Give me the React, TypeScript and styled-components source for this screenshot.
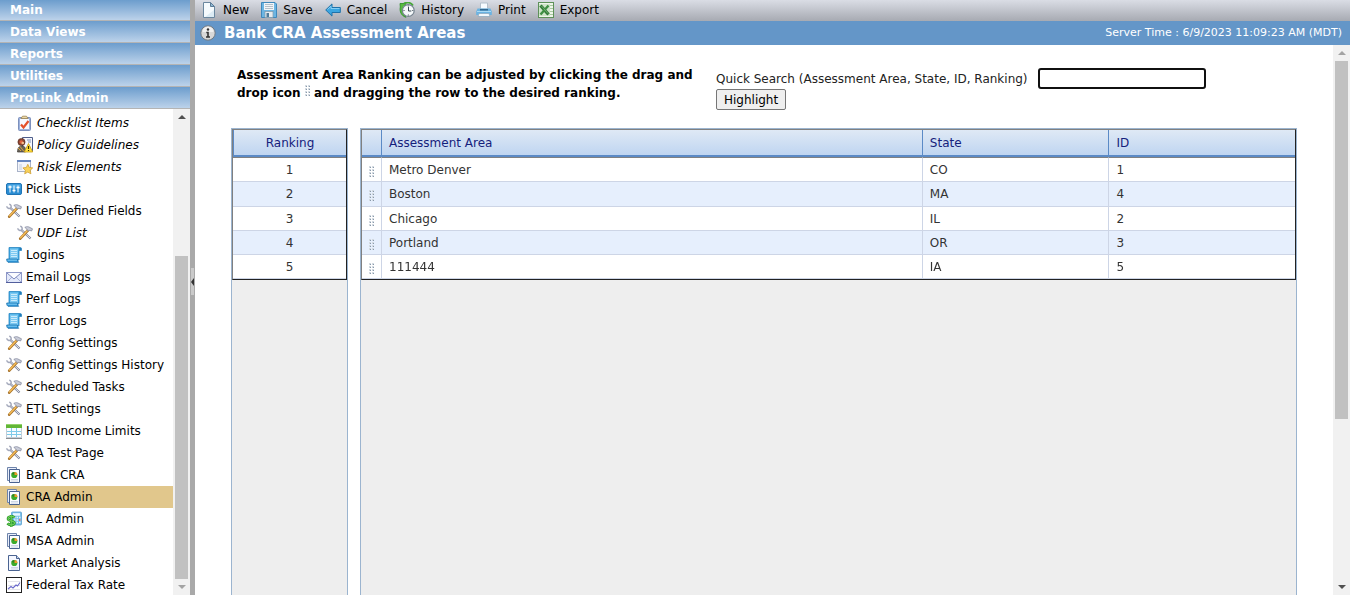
import React from 'react';
import styled, { createGlobalStyle, css } from 'styled-components';

const GlobalStyle = createGlobalStyle`
  * { box-sizing: border-box; }
  body {
    margin: 0;
    background: #fff;
    color: #000;
    font: 12px/18px "DejaVu Sans", sans-serif;
  }
  button, input { font: inherit; color: inherit; }
`;

/* ---------- Icons ---------- */

const Svg = styled.svg`
  flex: none;
  display: block;
  width: 16px;
  height: 16px;
`;

const Icon = ({ children }: { children: React.ReactNode }) => (
  <Svg viewBox="0 0 16 16" aria-hidden="true">{children}</Svg>
);

const ChecklistIcon = () => (
  <Icon>
    <rect x="1.5" y="2.5" width="12" height="13" rx="1" fill="#9fb3dc" stroke="#7c90bd" />
    <rect x="3" y="4" width="9" height="10" fill="#f7f9ff" />
    <path d="M4 3.500L5.500 1.200h4L11 3.500z" fill="#ecd9a6" stroke="#9a8350" strokeWidth=".8" />
    <path d="M4 9.500l2.500 3L11.500 6" fill="none" stroke="#e4512c" strokeWidth="2.200" />
  </Icon>
);

const PolicyIcon = () => (
  <Icon>
    <path d="M5.5 .5h10v14h-10z" fill="#f6f8ff" stroke="#4d5d8a" />
    <path d="M10 3h4M11 5h3" stroke="#7b8bb5" />
    <circle cx="4.500" cy="5" r="3.600" fill="#8c4634" stroke="#4b2518" strokeWidth=".6" />
    <circle cx="4.300" cy="5" r="1.800" fill="#e0603c" />
    <circle cx="5.800" cy="6" r="1.300" fill="#f1bd90" />
    <path d="M.5 15c0-4 1.500-6 4.500-6s3.500 2 3.500 6z" fill="#6a655c" stroke="#3c3830" strokeWidth=".7" />
    <path d="M1 11l3 3M3 9.500l4 5" stroke="#d9a441" />
    <path d="M11.500 6.500l4.200 8.500H7.300z" fill="#ffe13d" stroke="#c99a10" strokeWidth=".8" />
    <path d="M11.500 9v3M11.500 13v1" stroke="#3b3000" strokeWidth="1.200" />
  </Icon>
);

const RiskIcon = () => (
  <Icon>
    <rect x=".5" y="1.500" width="13" height="11" fill="#f3f5fb" stroke="#a9b3c9" />
    <rect x="0" y="1" width="14" height="2" fill="#6686c0" />
    <path d="M2 6h3M2 8h3M2 10h3" stroke="#c3cde0" />
    <path d="M10.800 5.300l1.500 3.200 3.400.4-2.500 2.400.7 3.500-3.100-1.700-3.100 1.700.7-3.500-2.500-2.400 3.400-.4z" fill="#f9d25a" stroke="#cf9f32" strokeWidth=".8" />
  </Icon>
);

const PickIcon = () => (
  <Icon>
    <rect x=".5" y="2.500" width="15" height="11" rx="1.500" fill="#2a8cd2" stroke="#1f74b5" />
    <path d="M1.500 3.500h13v4h-13z" fill="#4faae6" />
    <path d="M4 4.500v7M8 4.500v7M12 4.500v7" stroke="#fff" />
    <path d="M2.500 6h3M6.500 9.500h3M10.500 6.500h3" stroke="#fff" strokeWidth="1.600" />
  </Icon>
);

const ToolsIcon = () => (
  <Icon>
    <path d="M4.500 5L13.500 13.500" stroke="#7c8296" strokeWidth="2.200" />
    <path d="M4.500 5L13.300 13.300" stroke="#e4e6f0" strokeWidth="1" />
    <path d="M.8 3.200c.2 2 2.600 3 4 1.600M3.200 1.200c1.700.2 2.500 2 1.600 3.600" fill="none" stroke="#a3a8ba" strokeWidth="1.500" />
    <path d="M11.200 5L3.200 13.700" stroke="#a8742c" strokeWidth="2.600" strokeLinecap="round" />
    <path d="M10.900 5L3.200 13.300" stroke="#f6bd58" strokeWidth="1.400" />
    <path d="M7.800 2.400c1.800-1.200 4-.9 5.200.2l2.500 1.200-.9 2.200-1.800-.6-1.800.6-1.400-2.200z" fill="#c9ccd8" stroke="#7d8398" strokeWidth=".7" />
  </Icon>
);

const LogIcon = () => (
  <Icon>
    <path d="M3 .5h11.500q1 0 1 1.500v1.500H13V13H3z" fill="#3fa9e4" stroke="#2a86c2" strokeWidth=".8" />
    <path d="M13.400 1h1.700v2h-1.700z" fill="#2478b4" />
    <path d="M4 1.500h8V12H4z" fill="#7cc8f1" />
    <path d="M5 3.500h6M5 5.500h6M5 7.500h6M5 9.500h6" stroke="#c9ebfc" />
    <path d="M.7 12h10.500q.3 2.500 1.500 3.300H2Q.6 14.600 .7 12z" fill="#2f97d8" stroke="#1c74b0" strokeWidth=".8" />
    <path d="M1.500 13.200h9.500" stroke="#83cdf4" />
  </Icon>
);

const MailIcon = () => (
  <Icon>
    <rect x=".5" y="3.500" width="15" height="10" fill="#e3e9fa" stroke="#8f99c8" />
    <path d="M1 13l5-5M15 13l-5-5" stroke="#a5afd6" />
    <path d="M1 4l7 6 7-6" fill="#fbfcff" stroke="#7d89bd" />
    <path d="M0 13.500h16" stroke="#525e9c" />
  </Icon>
);

const TableIcon = () => (
  <Icon>
    <rect x=".5" y="1.500" width="15" height="13" fill="#fafdff" stroke="#c3cdd6" />
    <rect x="0" y="1" width="16" height="4" fill="#62b636" />
    <path d="M0 1.500h16" stroke="#93d36c" />
    <path d="M1 8.500h14M1 11.500h14M5.500 5v9M10.500 5v9" stroke="#7fcbea" />
    <path d="M0 15.500h16" stroke="#8b8f93" />
  </Icon>
);

const PieDocIcon = ({ stacked = true }: { stacked?: boolean }) => (
  <Icon>
    {stacked ? (
      <>
        <path d="M1.500 .5h9v13h-9z" fill="#e9eefb" stroke="#6e84aa" />
        <path d="M3.500 2.500h10v13h-10z" fill="#fbfcff" stroke="#4a6391" />
      </>
    ) : (
      <>
        <path d="M2.500 .5h8l3 3v12h-11z" fill="#f4f7ff" stroke="#4a6391" />
        <path d="M10.500 .5v3h3" fill="#c7d5ee" stroke="#4a6391" />
      </>
    )}
    <circle cx="8.300" cy="8" r="3.100" fill="#3dab2b" />
    <path d="M8.300 8V4.900A3.100 3.100 0 0 1 11.400 8z" fill="#f09a28" />
    <path d="M8.300 8L5.500 6.700A3.100 3.100 0 0 1 8.300 4.900z" fill="#2c8423" />
    <path d="M5 12.500h7M5 14h7" stroke="#c3ccde" strokeWidth=".8" />
  </Icon>
);

const MoneyIcon = () => (
  <Icon>
    <rect x="5.500" y="1" width="10" height="13" rx="1" fill="#7cc2ec" stroke="#5a9fce" strokeWidth=".8" />
    <rect x="7" y="2.200" width="7" height="2.500" fill="#e8f7ff" />
    <path d="M8 6.500h6.500M8 9h6.500M8 11.500h6.500" stroke="#e5f3fb" strokeWidth="1.500" strokeDasharray="1.500 1" />
    <path d="M13 9h1.500" stroke="#dc5642" strokeWidth="1.500" />
    <path d="M8.500 6.500C7 4.800 2 5 2 7.700c0 2.800 6.500 1.600 6.500 4.200 0 2.500-5.500 2.500-7 .5M5.200 4v12" fill="none" stroke="#239023" strokeWidth="2.600" />
    <path d="M8.500 6.500C7 4.800 2 5 2 7.700c0 2.800 6.500 1.600 6.500 4.200 0 2.500-5.500 2.500-7 .5M5.200 4v12" fill="none" stroke="#6ace57" strokeWidth="1.200" />
  </Icon>
);

const LineChartIcon = () => (
  <Icon>
    <rect x=".5" y=".5" width="15" height="15" fill="#fff" stroke="#222" />
    <path d="M2 4.500h12M2 8.500h12M2 12.500h12" stroke="#e4e4ea" />
    <path d="M2 12l3-2.500 2 1.500 3-3 1.500 1L14 5.500" fill="none" stroke="#6a6acb" strokeWidth="1.100" />
  </Icon>
);

const NewIcon = () => (
  <Icon>
    <path d="M2.500 .5h7l4 4v11h-11z" fill="#f5fafd" stroke="#6b879f" />
    <path d="M9.500 .5v4h4z" fill="#8fbad6" stroke="#5d7c97" />
    <path d="M4 15h9V8z" fill="#dcebf4" />
  </Icon>
);

const SaveIcon = () => (
  <Icon>
    <path d="M.5 .5h13.500l1.500 1.500v13.500H.5z" fill="#6bb5e3" stroke="#3f88bb" />
    <rect x="3" y="1" width="10" height="7" fill="#f1f5f8" />
    <path d="M4 2.500h8M4 4.500h8M4 6.500h8" stroke="#b4bfc8" />
    <rect x="4" y="9.500" width="8" height="6" fill="#e6ebee" stroke="#7f98a8" strokeWidth=".7" />
    <rect x="5.500" y="11" width="2.500" height="4" fill="#4f7c9b" />
  </Icon>
);

const BackIcon = () => (
  <Icon>
    <path d="M.7 8L7 1.900v3.600h8.300v5H7v3.600z" fill="#3ba5e0" stroke="#1f72a9" strokeLinejoin="round" />
    <path d="M2.500 7.500l3.500-3.300v2.300h8.500" fill="none" stroke="#87cff5" />
  </Icon>
);

const HistoryIcon = () => (
  <Icon>
    <path d="M1 1.500h6l-2 3C3.500 8 4 12 7 15.300 2.500 14 .3 9.500 1.300 5z" fill="#57bb40" stroke="#2b8a25" strokeWidth=".8" />
    <path d="M5 1.500C8-.2 12 .3 14 3.500" fill="none" stroke="#45a837" strokeWidth="1.800" />
    <circle cx="9.300" cy="8.500" r="5.900" fill="#f5f8fa" stroke="#75838f" strokeWidth="1.200" />
    <path d="M9.500 5v4h2.800M9.300 3.500v1M9.300 12.500v1M13.300 8.500h1M4.500 8.500h1" fill="none" stroke="#3a4853" />
  </Icon>
);

const PrintIcon = () => (
  <Icon>
    <path d="M4.500 1h7v6h-7z" fill="#f7fbff" stroke="#b3c0cc" />
    <path d="M1.500 6.500h13l1.300 3v3.500H.2V9.500z" fill="#6ab3e2" />
    <path d="M1 9.500h14" stroke="#a9daf5" />
    <path d="M4 7h8v1.500H4z" fill="#35688f" />
    <path d="M3 11.500h10l1 3H2z" fill="#f3f8fb" stroke="#8fabc0" strokeWidth=".8" />
  </Icon>
);

const ExcelIcon = () => (
  <Icon>
    <rect x=".5" y=".5" width="15" height="15" fill="#eef5ea" stroke="#5e9159" />
    <path d="M12 3.500h3M12 6.500h3M12 9.500h3M12 12.500h3" stroke="#a8c9a0" />
    <rect x="1" y="2" width="11" height="12" fill="#cfe4c9" />
    <path d="M2.500 3.500l8 9" stroke="#2f7a35" strokeWidth="3.200" />
    <path d="M10.500 3.500l-8 9" stroke="#3f8f43" strokeWidth="2.400" />
    <path d="M3.500 4l6.500 7.500" stroke="#83b97f" strokeWidth=".8" />
  </Icon>
);

const InfoIcon = () => (
  <Icon>
    <circle cx="8" cy="8" r="7.200" fill="#d8d8d8" stroke="#727a82" strokeWidth="1" />
    <path d="M2.500 7a5.500 5.500 0 0 1 11 0z" fill="#f0f0f0" />
    <circle cx="8" cy="4.500" r="1.200" fill="#333" />
    <path d="M6.300 7.500H8V12M6 12h4" fill="none" stroke="#333" strokeWidth="1.600" />
  </Icon>
);

const GripSvg = styled.svg<{ $raised?: boolean }>`
  display: inline-block;
  width: 5px;
  height: 12px;
  vertical-align: ${(p) => (p.$raised ? 'baseline' : 'middle')};
`;

const Grip = ({ raised }: { raised?: boolean }) => (
  <GripSvg viewBox="0 0 5 12" $raised={raised} shapeRendering="crispEdges" aria-hidden="true">
    {[0, 3, 6, 9].map((y) => (
      <g key={y}>
        <path d={`M0 ${y + 0.5}h2M3 ${y + 0.5}h2`} stroke="#d3dae1" />
        <path d={`M0 ${y + 1.5}h1M3 ${y + 1.5}h1`} stroke="#d3dae1" />
        <path d={`M1 ${y + 1.5}h1M4 ${y + 1.5}h1`} stroke="#8999aa" />
      </g>
    ))}
  </GripSvg>
);

/* ---------- Scroll bar ---------- */

const Track = styled.div`
  flex: none;
  display: flex;
  flex-direction: column;
  align-items: center;
  width: 17px;
  background: #f1f1f1;
`;

const TrackEnd = styled.span<{ $dim?: boolean; $down?: boolean }>`
  flex: none;
  display: flex;
  align-items: center;
  height: 16px;
  &::before {
    content: '';
    border: 4px solid transparent;
    border-top-width: ${(p) => (p.$down ? '4px' : '0')};
    border-bottom-width: ${(p) => (p.$down ? '0' : '4px')};
    border-${(p) => (p.$down ? 'top' : 'bottom')}-color: ${(p) => (p.$dim ? '#a3a3a3' : '#505050')};
  }
`;

const TrackSpace = styled.span<{ $grow: number }>`
  flex: ${(p) => p.$grow} 1 0;
`;

const Thumb = styled(TrackSpace)`
  width: 13px;
  background: #c1c1c1;
`;

interface ScrollProps { before: number; thumb: number; after: number }

const ScrollBar = ({ before, thumb, after }: ScrollProps) => (
  <Track aria-hidden="true">
    <TrackEnd $dim={before === 0} />
    <TrackSpace $grow={before} />
    <Thumb $grow={thumb} />
    <TrackSpace $grow={after} />
    <TrackEnd $down $dim={after === 0} />
  </Track>
);

/* ---------- Side bar ---------- */

const Page = styled.div`
  display: flex;
  height: 100vh;
  overflow: hidden;
`;

const Sidebar = styled.aside`
  flex: none;
  display: flex;
  flex-direction: column;
  width: 190px;
`;

const Section = styled.button`
  flex: none;
  height: 22px;
  padding: 0 10px;
  border: 0;
  border-bottom: 1px solid #b4b4b4;
  background: linear-gradient(#6c9dcd, #bcd2ea);
  color: #fff;
  font-weight: bold;
  line-height: 20px;
  text-align: left;
  &:first-child { height: 21px; line-height: 18px; }
`;

const NavArea = styled.div`
  flex: 1;
  display: flex;
  min-height: 0;
`;

const NavList = styled.nav`
  flex: 1;
  min-width: 0;
  padding-top: 3px;
  overflow: hidden;
`;

const NavLink = styled.a<{ $sub?: boolean; $active?: boolean }>`
  display: flex;
  align-items: center;
  gap: 4px;
  height: 22px;
  padding-left: ${(p) => (p.$sub ? '17px' : '6px')};
  color: #000;
  font-style: ${(p) => (p.$sub ? 'italic' : 'normal')};
  background: ${(p) => (p.$active ? '#e1c78c' : 'transparent')};
  text-decoration: none;
  white-space: nowrap;
`;

const Splitter = styled.div`
  flex: none;
  display: flex;
  align-items: center;
  justify-content: flex-end;
  width: 5px;
  padding: 0 1px 32px 0;
  background: #a9a9a9;
`;

const SplitHandle = styled.button`
  display: flex;
  align-items: center;
  width: 3px;
  height: 27px;
  padding: 0;
  border: 0;
  background: #cacaca;
  &::before {
    content: '';
    border: 4px solid transparent;
    border-left-width: 0;
    border-right: 3px solid #333;
  }
`;

/* ---------- Main area ---------- */

const Main = styled.main`
  flex: 1;
  display: flex;
  flex-direction: column;
  min-width: 0;
`;

const Toolbar = styled.div`
  flex: none;
  display: flex;
  gap: 12px;
  height: 21px;
  padding: 0 6px 2px;
  background: linear-gradient(#dadde5, #a7aab2);
`;

const ToolButton = styled.button`
  display: flex;
  align-items: center;
  gap: 6px;
  padding: 0;
  border: 0;
  background: none;
`;

const TitleBar = styled.header`
  flex: none;
  display: flex;
  align-items: center;
  gap: 8px;
  height: 24px;
  padding: 0 8px 0 5px;
  background: #6496c8;
  color: #fff;
`;

const Title = styled.h1`
  flex: 1;
  margin: 0;
  font-size: 15px;
  line-height: 24px;
`;

const ServerTime = styled.span`
  font-size: 11px;
`;

const Body = styled.div`
  flex: 1;
  display: flex;
  min-height: 0;
`;

const Content = styled.div`
  flex: 1;
  display: flex;
  flex-direction: column;
  min-width: 0;
  padding: 21px 36px 0;
`;

const Intro = styled.div`
  flex: none;
  display: flex;
  gap: 19px;
  height: 62px;
  padding-left: 6px;
`;

const Instruction = styled.p`
  flex: none;
  width: 460px;
  margin: 0;
  font-weight: bold;
`;

const Search = styled.form`
  padding-top: 2px;
`;

const SearchRow = styled.div`
  display: flex;
  align-items: center;
  gap: 4px;
  white-space: nowrap;
`;

const SearchLabel = styled.label`
  min-width: 318px;
  color: #222;
`;

const SearchInput = styled.input`
  width: 168px;
  height: 21px;
  padding: 0 2px;
  border: 2px solid #101010;
  border-radius: 3px;
  outline: none;
  background: #fff;
`;

const Highlight = styled.button`
  display: block;
  height: 21px;
  padding: 0 7px;
  border: 1px solid #767676;
  border-radius: 2px;
  background: #efefef;
  line-height: 18px;
`;

const Panels = styled.div`
  flex: 1;
  display: flex;
  gap: 12px;
  min-height: 0;
`;

const Panel = styled.section<{ $narrow?: boolean }>`
  flex: ${(p) => (p.$narrow ? '0 0 117px' : '1')};
  min-width: 0;
  border: 1px solid #9bb4cf;
  border-bottom: 0;
  background: #eee;
`;

const Table = styled.table`
  width: 100%;
  table-layout: fixed;
  border: 1px solid;
  border-color: #808080 #222 #222 #808080;
  border-spacing: 0;
`;

const align = css<{ $center?: boolean }>`
  text-align: ${(p) => (p.$center ? 'center' : 'left')};
`;

const HeadCell = styled.th<{ $center?: boolean; $width?: string }>`
  ${align}
  width: ${(p) => p.$width ?? 'auto'};
  height: 27px;
  padding: 0 7px;
  border-bottom: 2px solid #5b8ac6;
  border-left: 1px solid #5b8ac6;
  background: linear-gradient(#dfe9f5, #bfd5f1);
  color: #15217c;
  font-weight: normal;
  &:first-child { border-left-width: ${(p) => (p.$center ? '1px' : '0')}; }
`;

const Cell = styled.td<{ $center?: boolean }>`
  ${align}
  height: 24px;
  padding: 0 7px;
  border-bottom: 1px solid #cdd5e6;
  border-left: 1px solid #cdd5e6;
  background: #fff;
  color: #333;
  &:first-child { border-left: 0; }
  tr:nth-child(even) > & { background: #e6effd; }
  tr:first-child > & { height: 25px; border-top: 1px solid #808080; }
  tr:nth-child(2) > & { height: 25px; }
`;

const GripCell = styled(Cell)`
  padding: 4px 0 0;
  line-height: 12px;
`;

type NavItem = { label: string; icon: React.ReactNode; sub?: boolean; active?: boolean };

const navItems: NavItem[] = [
  { label: 'Checklist Items', icon: <ChecklistIcon />, sub: true },
  { label: 'Policy Guidelines', icon: <PolicyIcon />, sub: true },
  { label: 'Risk Elements', icon: <RiskIcon />, sub: true },
  { label: 'Pick Lists', icon: <PickIcon /> },
  { label: 'User Defined Fields', icon: <ToolsIcon /> },
  { label: 'UDF List', icon: <ToolsIcon />, sub: true },
  { label: 'Logins', icon: <LogIcon /> },
  { label: 'Email Logs', icon: <MailIcon /> },
  { label: 'Perf Logs', icon: <LogIcon /> },
  { label: 'Error Logs', icon: <LogIcon /> },
  { label: 'Config Settings', icon: <ToolsIcon /> },
  { label: 'Config Settings History', icon: <ToolsIcon /> },
  { label: 'Scheduled Tasks', icon: <ToolsIcon /> },
  { label: 'ETL Settings', icon: <ToolsIcon /> },
  { label: 'HUD Income Limits', icon: <TableIcon /> },
  { label: 'QA Test Page', icon: <ToolsIcon /> },
  { label: 'Bank CRA', icon: <PieDocIcon /> },
  { label: 'CRA Admin', icon: <PieDocIcon />, active: true },
  { label: 'GL Admin', icon: <MoneyIcon /> },
  { label: 'MSA Admin', icon: <PieDocIcon /> },
  { label: 'Market Analysis', icon: <PieDocIcon stacked={false} /> },
  { label: 'Federal Tax Rate', icon: <LineChartIcon /> },
];

const tools = [
  { label: 'New', icon: <NewIcon /> },
  { label: 'Save', icon: <SaveIcon /> },
  { label: 'Cancel', icon: <BackIcon /> },
  { label: 'History', icon: <HistoryIcon /> },
  { label: 'Print', icon: <PrintIcon /> },
  { label: 'Export', icon: <ExcelIcon /> },
];

const areas = [
  { name: 'Metro Denver', state: 'CO', id: 1 },
  { name: 'Boston', state: 'MA', id: 4 },
  { name: 'Chicago', state: 'IL', id: 2 },
  { name: 'Portland', state: 'OR', id: 3 },
  { name: '111444', state: 'IA', id: 5 },
];

export default function App() {
  return (
    <Page>
      <GlobalStyle />
      <Sidebar>
        {['Main', 'Data Views', 'Reports', 'Utilities', 'ProLink Admin'].map((name) => (
          <Section key={name} type="button">{name}</Section>
        ))}
        <NavArea>
          <NavList>
            {navItems.map(({ label, icon, sub, active }) => (
              <NavLink key={label} href="#" $sub={sub} $active={active}>
                {icon}
                {label}
              </NavLink>
            ))}
          </NavList>
          <ScrollBar before={131} thumb={323} after={0} />
        </NavArea>
      </Sidebar>
      <Splitter>
        <SplitHandle type="button" aria-label="Collapse side bar" />
      </Splitter>
      <Main>
        <Toolbar>
          {tools.map(({ label, icon }) => (
            <ToolButton key={label} type="button">
              {icon}
              {label}
            </ToolButton>
          ))}
        </Toolbar>
        <TitleBar>
          <InfoIcon />
          <Title>Bank CRA Assessment Areas</Title>
          <ServerTime>Server Time : 6/9/2023 11:09:23 AM (MDT)</ServerTime>
        </TitleBar>
        <Body>
          <Content>
            <Intro>
              <Instruction>
                Assessment Area Ranking can be adjusted by clicking the drag and drop icon{' '}
                <Grip raised /> and dragging the row to the desired ranking.
              </Instruction>
              <Search onSubmit={(e) => e.preventDefault()}>
                <SearchRow>
                  <SearchLabel htmlFor="quick-search">
                    Quick Search (Assessment Area, State, ID, Ranking)
                  </SearchLabel>
                  <SearchInput id="quick-search" type="text" autoFocus />
                </SearchRow>
                <Highlight type="submit">Highlight</Highlight>
              </Search>
            </Intro>
            <Panels>
              <Panel $narrow>
                <Table>
                  <thead>
                    <tr><HeadCell $center>Ranking</HeadCell></tr>
                  </thead>
                  <tbody>
                    {areas.map((area, i) => (
                      <tr key={area.name}><Cell $center>{i + 1}</Cell></tr>
                    ))}
                  </tbody>
                </Table>
              </Panel>
              <Panel>
                <Table>
                  <thead>
                    <tr>
                      <HeadCell $width="19px" aria-label="Drag handle" />
                      <HeadCell>Assessment Area</HeadCell>
                      <HeadCell $width="20%">State</HeadCell>
                      <HeadCell $width="20%">ID</HeadCell>
                    </tr>
                  </thead>
                  <tbody>
                    {areas.map((area) => (
                      <tr key={area.name}>
                        <GripCell $center><Grip /></GripCell>
                        <Cell>{area.name}</Cell>
                        <Cell>{area.state}</Cell>
                        <Cell>{area.id}</Cell>
                      </tr>
                    ))}
                  </tbody>
                </Table>
              </Panel>
            </Panels>
          </Content>
          <ScrollBar before={0} thumb={358} after={160} />
        </Body>
      </Main>
    </Page>
  );
}
